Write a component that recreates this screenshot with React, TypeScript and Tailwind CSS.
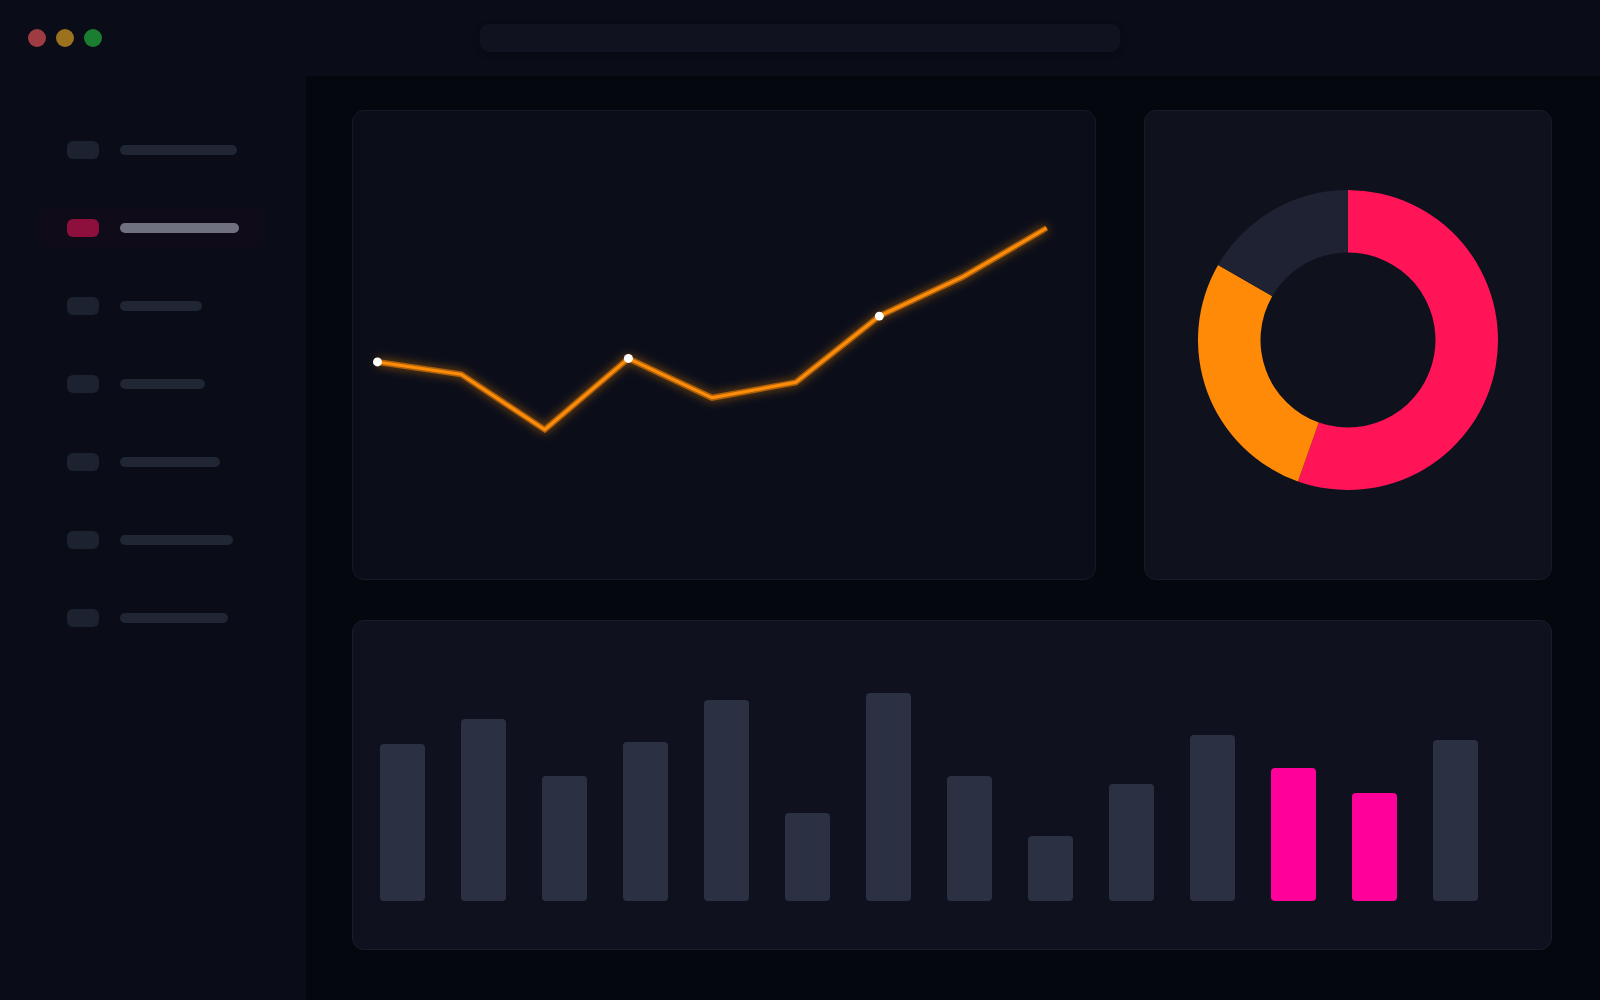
import React from "react";

const navBars = [117, 119, 82, 85, 100, 113, 108];
const barHeights = [157, 182, 125, 159, 201, 88, 208, 125, 65, 117, 166, 133, 108, 161];
const pinkIdx = [11, 12];

const linePts: [number, number][] = [
  [24, 252],
  [108, 264.5],
  [192, 320],
  [276, 248.5],
  [360, 288],
  [444, 272.5],
  [528, 206],
  [612, 166.5],
  [696, 117.5],
];
const dotIdx = [0, 3, 6];

function arcPath(cx: number, cy: number, rO: number, rI: number, a0: number, a1: number) {
  const rad = (a: number) => ((a - 90) * Math.PI) / 180;
  const p = (r: number, a: number) => [cx + r * Math.cos(rad(a)), cy + r * Math.sin(rad(a))];
  const large = a1 - a0 > 180 ? 1 : 0;
  const [x0, y0] = p(rO, a0);
  const [x1, y1] = p(rO, a1);
  const [x2, y2] = p(rI, a1);
  const [x3, y3] = p(rI, a0);
  return `M${x0} ${y0} A${rO} ${rO} 0 ${large} 1 ${x1} ${y1} L${x2} ${y2} A${rI} ${rI} 0 ${large} 0 ${x3} ${y3} Z`;
}

function LineChart() {
  const d = linePts.map((p, i) => `${i === 0 ? "M" : "L"}${p[0]} ${p[1]}`).join(" ");
  return (
    <svg className="w-full h-full" viewBox="0 0 744 470">
      <defs>
        <filter id="glow" x="-20%" y="-50%" width="140%" height="200%">
          <feGaussianBlur stdDeviation="5" result="b" />
          <feMerge>
            <feMergeNode in="b" />
            <feMergeNode in="SourceGraphic" />
          </feMerge>
        </filter>
      </defs>
      <path d={d} fill="none" stroke="#ff8a00" strokeOpacity="0.55" strokeWidth="6" strokeLinejoin="miter" filter="url(#glow)" />
      <path d={d} fill="none" stroke="#ff8c0a" strokeWidth="3" strokeLinejoin="miter" />
      {dotIdx.map((i) => (
        <circle key={i} cx={linePts[i][0]} cy={linePts[i][1]} r="4.5" fill="#ffffff" />
      ))}
    </svg>
  );
}

function Donut() {
  const c = 150;
  return (
    <svg width="300" height="300" viewBox="0 0 300 300">
      <path d={arcPath(c, c, 150, 87.5, 0, 199.5)} fill="#ff1458" />
      <path d={arcPath(c, c, 150, 87.5, 199.5, 300)} fill="#ff8a07" />
      <path d={arcPath(c, c, 150, 87.5, 300, 360)} fill="#1f2232" />
    </svg>
  );
}

export default function App() {
  return (
    <div className="w-[1600px] h-[1000px] flex flex-col bg-[#05070f] overflow-hidden font-['Inter',sans-serif]">
      <div className="h-[76px] shrink-0 grid grid-cols-[1fr_640px_1fr] items-center bg-[#0a0d18]">
        <div className="flex items-center gap-[10px] pl-[28px]">
          <div className="w-[18px] h-[18px] rounded-full bg-[#9e3b43]" />
          <div className="w-[18px] h-[18px] rounded-full bg-[#9c721f]" />
          <div className="w-[18px] h-[18px] rounded-full bg-[#1b7d30]" />
        </div>
        <div className="h-[28px] rounded-[9px] bg-[#10131f] shadow-[0_2px_6px_rgba(0,0,0,0.25)]" />
        <div />
      </div>
      <div className="flex flex-1">
        <div className="w-[306px] shrink-0 bg-[#0a0d18] pt-[54px] pl-[40px] flex flex-col gap-[39px]">
          {navBars.map((w, i) => {
            const active = i === 1;
            return (
              <div
                key={i}
                className={`w-[223px] h-[39px] flex items-center pl-[27px] gap-[21px] rounded-[8px] ${active ? "bg-[#100b19]" : ""}`}
              >
                <div
                  className={`w-[32px] h-[18px] rounded-[6px] ${active ? "bg-[#8c0f3c]" : "bg-[#1d2230]"}`}
                />
                <div
                  className={`h-[10px] rounded-full ${active ? "bg-[#6f7181]" : "bg-[#212634]"}`}
                  style={{ width: w }}
                />
              </div>
            );
          })}
        </div>
        <div className="flex-1 pl-[46px] pr-[48px] pt-[34px] flex flex-col gap-[40px]">
          <div className="flex gap-[48px] h-[470px]">
            <div className="w-[744px] h-[470px] rounded-[12px] bg-[#0b0e19] border border-[#161a26] overflow-hidden">
              <LineChart />
            </div>
            <div className="flex-1 h-[470px] rounded-[12px] bg-[#0f121d] border border-[#181c28] flex items-center justify-center pb-[10px]">
              <Donut />
            </div>
          </div>
          <div className="h-[330px] rounded-[12px] bg-[#0f121e] border border-[#1a1d29] flex items-end pl-[27px] pb-[48px] gap-[36px]">
            {barHeights.map((h, i) => (
              <div
                key={i}
                className={`w-[45px] rounded-[4px] ${pinkIdx.includes(i) ? "bg-[#ff009b]" : "bg-[#2b3043]"}`}
                style={{ height: h }}
              />
            ))}
          </div>
        </div>
      </div>
    </div>
  );
}
